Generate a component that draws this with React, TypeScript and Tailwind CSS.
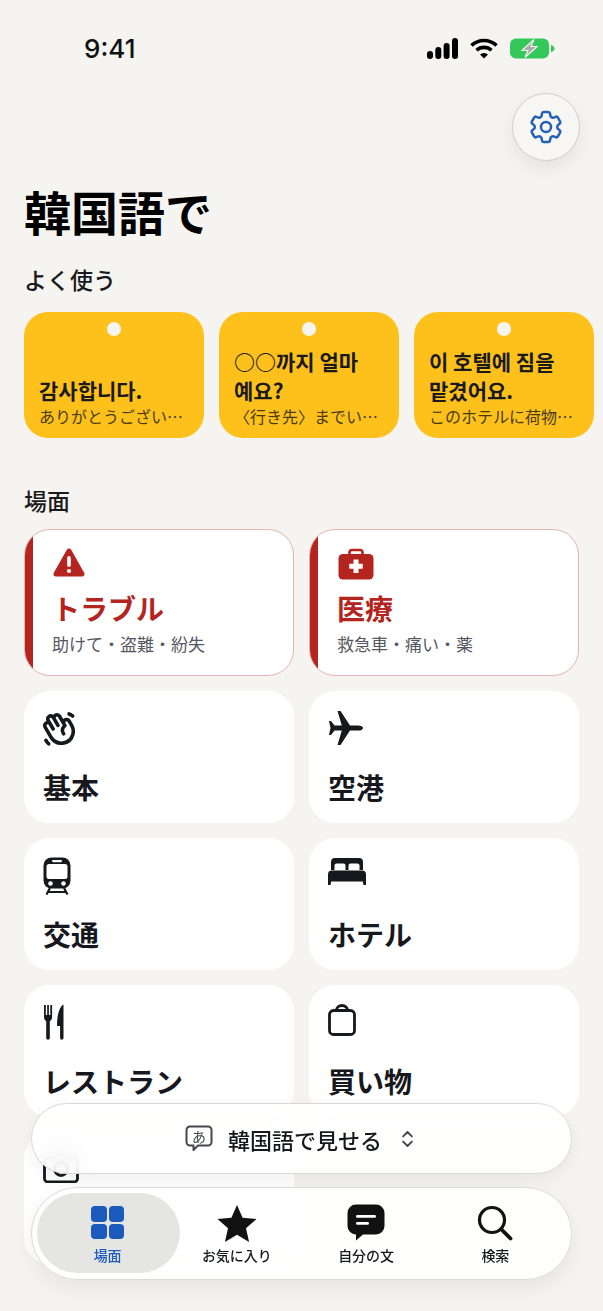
import { ChevronsUpDown } from "lucide-react";
import { HiOutlineCog6Tooth } from "react-icons/hi2";
import { PiHandWavingBold } from "react-icons/pi";
import type { ReactNode } from "react";

type Quick = { ko: string; ja: string };

const quickList: Quick[] = [
  { ko: "감사합니다.", ja: "ありがとうございます。" },
  { ko: "○○까지 얼마\n예요?", ja: "〈行き先〉までいくらですか？" },
  { ko: "이 호텔에 짐을\n맡겼어요.", ja: "このホテルに荷物を預けました。" },
];

function WarningIcon() {
  return (
    <svg width="32" height="30" viewBox="0 0 32 30">
      <path d="M16 3 L29 26 H3 Z" fill="#b3251e" stroke="#b3251e" strokeWidth="5" strokeLinejoin="round" />
      <rect x="14.2" y="8" width="3.6" height="11" rx="1.8" fill="#fff" />
      <circle cx="16" cy="23" r="2.1" fill="#fff" />
    </svg>
  );
}

function MedicalIcon() {
  return (
    <svg width="36" height="32" viewBox="0 0 36 32">
      <path d="M11.5 7V4.5a2.5 2.5 0 0 1 2.5-2.5h8a2.5 2.5 0 0 1 2.5 2.5V7" fill="none" stroke="#b3251e" strokeWidth="2.6" />
      <rect x="0.5" y="6" width="35" height="25.5" rx="4.5" fill="#b3251e" />
      <path d="M15.5 11.5h5v4.2h4.2v5h-4.2v4.2h-5v-4.2h-4.2v-5h4.2z" fill="#fff" />
    </svg>
  );
}

function PlaneIcon() {
  return (
    <svg width="36" height="36" viewBox="0 0 36 36" fill="#16181d">
      <path d="M35 18c0-1.6-2.2-2.6-5-2.6h-8L12.500 1H9.500l4.300 14.400H6.500L3 11H1l1.500 7L1 25h2l3.500-4.400h7.300L9.500 35h3L22 20.600h8c2.800 0 5-1 5-2.600z" />
    </svg>
  );
}

function TrainIcon() {
  return (
    <svg width="28" height="38" viewBox="0 0 28 38">
      <rect x="0.500" y="0.500" width="27" height="31" rx="8" fill="#16181d" />
      <rect x="3.500" y="7" width="21" height="15" rx="2.500" fill="#fff" />
      <rect x="9" y="3" width="10" height="2.200" rx="1.100" fill="#fff" />
      <circle cx="7.500" cy="26.500" r="2.300" fill="#fff" />
      <circle cx="20.500" cy="26.500" r="2.300" fill="#fff" />
      <path d="M7 31 L3.500 37.500 M21 31 L24.500 37.500 M5.500 35 H22.500" stroke="#16181d" strokeWidth="2.200" fill="none" />
    </svg>
  );
}

function BedIcon() {
  return (
    <svg width="38" height="28" viewBox="0 0 38 28" fill="#16181d">
      <path d="M3 13V5a4 4 0 0 1 4-4h24a4 4 0 0 1 4 4v8h-3.500V8.500a2 2 0 0 0-2-2h-7a2 2 0 0 0-2 2V13h-3V8.500a2 2 0 0 0-2-2h-7a2 2 0 0 0-2 2V13z" />
      <path d="M4 13.500h30a4 4 0 0 1 4 4V28h-2.500l-.7-3.500H3.200L2.500 28H0V17.500a4 4 0 0 1 4-4z" />
    </svg>
  );
}

function ForkKnifeIcon() {
  return (
    <svg width="22" height="36" viewBox="0 0 22 36" fill="#16181d">
      <path d="M1 1h1.800v10h1.400V1h1.700v10h1.400V1H9.100v12c0 2-1 3.400-2.300 4V34a1.800 1.800 0 0 1-3.600 0V17C1.900 16.400 1 15 1 13z" />
      <path d="M20.500 0.500V34a1.700 1.700 0 0 1-3.400 0V22h-2.600c-.3 0-.5-.2-.5-.5C14 12 16 3 20.500 0.500z" />
    </svg>
  );
}

function BagIcon() {
  return (
    <svg width="28" height="32" viewBox="0 0 28 32" fill="none" stroke="#16181d" strokeWidth="2.800">
      <rect x="1.500" y="6.500" width="25" height="24" rx="4" />
      <path d="M8.500 6.500V6a5.500 4.500 0 0 1 11 0v.5" />
    </svg>
  );
}

function CameraIcon() {
  return (
    <svg width="36" height="32" viewBox="0 0 36 32" fill="none" stroke="#16181d" strokeWidth="2.800">
      <path d="M5 7h6l2.500-4h9L25 7h6a3.500 3.500 0 0 1 3.500 3.500v17A3.500 3.500 0 0 1 31 31H5a3.500 3.500 0 0 1-3.500-3.500v-17A3.500 3.500 0 0 1 5 7z" />
      <circle cx="18" cy="18" r="6.500" />
    </svg>
  );
}

function SceneCard({ icon, title }: { icon: ReactNode; title: string }) {
  return (
    <div className="h-[132px] bg-white rounded-[26px] pl-[19px] pt-[19px] flex flex-col">
      <div className="h-[40px] flex items-start">{icon}</div>
      <div className="mt-[19px] text-[28px] leading-[36px] font-bold text-[#16181d]">{title}</div>
    </div>
  );
}

function AlertCard({ icon, title, sub }: { icon: ReactNode; title: string; sub: string }) {
  return (
    <div className="h-[147px] bg-white rounded-[26px] border-[1.500px] border-[#e6b4b0] overflow-hidden flex">
      <div className="w-[8px] bg-[#b3251e] shrink-0" />
      <div className="pl-[19px] pt-[18px] flex flex-col">
        <div className="h-[34px] flex items-start pl-[1px]">{icon}</div>
        <div className="mt-[8px] text-[28px] leading-[36px] font-bold text-[#b3251e]">{title}</div>
        <div className="mt-[6px] text-[17px] leading-[24px] text-[#55585f]">{sub}</div>
      </div>
    </div>
  );
}

function NavItem({ icon, label, active }: { icon: ReactNode; label: string; active?: boolean }) {
  return (
    <div className="relative flex flex-col items-center">
      <div className="h-[39px] flex items-center justify-center">{icon}</div>
      <div className={`mt-[3px] text-[14px] leading-[20px] font-medium ${active ? "text-[#1b5abc]" : "text-[#16181d]"}`}>
        {label}
      </div>
    </div>
  );
}

export default function App() {
  return (
    <div className="relative w-[603px] h-[1311px] overflow-hidden bg-[#f5f4f0] font-['Noto_Sans_CJK_JP','Noto_Sans_CJK_KR',sans-serif]">
      {/* status bar */}
      <div className="h-[93px] flex items-start justify-between pl-[84px] pr-[48px] pt-[31px]">
        <div className="font-['Inter',sans-serif] text-[26px] leading-[36px] font-medium text-[#111]">9:41</div>
        <div className="flex items-center gap-[12px] pt-[7px]">
          <svg width="31" height="21" viewBox="0 0 31 21" fill="#000">
            <rect x="0" y="13" width="6" height="8" rx="3" />
            <rect x="8.300" y="9" width="6" height="12" rx="3" />
            <rect x="16.600" y="5" width="6" height="16" rx="3" />
            <rect x="25" y="0" width="6" height="21" rx="3" />
          </svg>
          <svg width="28" height="21" viewBox="0 0 28 21" fill="none" stroke="#000" strokeWidth="3.600">
            <path d="M1.500 7.500a18 18 0 0 1 25 0" />
            <path d="M6.500 12.300a11 11 0 0 1 15 0" />
            <path d="M14 20.500l-4-4a5.800 5.800 0 0 1 8 0z" fill="#000" stroke="none" />
          </svg>
          <svg width="45" height="21" viewBox="0 0 45 21">
            <rect x="0" y="0.500" width="39" height="20" rx="6" fill="#34c759" />
            <path d="M41 7v7c2.200-.5 3.500-2 3.500-3.500S43.200 7.500 41 7z" fill="#34c759" />
            <path d="M24 1.500 L12 12.500 H18 L15 19.500 L27 8.500 H21 Z" fill="#a8a8a6" stroke="#f5f4f0" strokeWidth="1.200" />
          </svg>
        </div>
      </div>

      <div className="flex justify-end pr-[23px]">
        <div className="w-[68px] h-[68px] rounded-full bg-[#f7f6f3] border border-[#cfcfcc] shadow-[0_8px_20px_rgba(0,0,0,0.07)] flex items-center justify-center">
          <HiOutlineCog6Tooth className="w-[40px] h-[40px] text-[#2460b8]" />
        </div>
      </div>

      <h1 className="mt-[22px] pl-[24px] text-[47px] leading-[56px] font-bold text-black">韓国語で</h1>

      <h2 className="mt-[24px] pl-[24px] text-[23px] leading-[32px] font-medium text-[#1a1a1c]">よく使う</h2>

      <div className="mt-[17px] pl-[24px] flex gap-[15px]">
        {quickList.map((q) => (
          <div key={q.ko} className="relative w-[180px] h-[126px] shrink-0 rounded-[24px] bg-[#fec11c] px-[15px] pb-[11px] flex flex-col justify-end">
            <div className="absolute left-[83px] top-[10px] w-[14px] h-[14px] rounded-full bg-[#f5f4f0]" />
            <div className="text-[21px] leading-[29px] font-bold text-[#1a1a1c] whitespace-pre-line">{q.ko}</div>
            <div className="text-[16px] leading-[22px] text-[#4a3c10] truncate">{q.ja}</div>
          </div>
        ))}
      </div>

      <h2 className="mt-[46px] pl-[24px] text-[23px] leading-[32px] font-medium text-[#1a1a1c]">場面</h2>

      <div className="mt-[13px] ml-[24px] w-[555px] grid grid-cols-2 gap-[15px]">
        <AlertCard icon={<WarningIcon />} title="トラブル" sub="助けて・盗難・紛失" />
        <AlertCard icon={<MedicalIcon />} title="医療" sub="救急車・痛い・薬" />
        <SceneCard icon={<PiHandWavingBold className="w-[38px] h-[38px] text-[#16181d] -ml-[3px]" />} title="基本" />
        <SceneCard icon={<PlaneIcon />} title="空港" />
        <SceneCard icon={<TrainIcon />} title="交通" />
        <SceneCard icon={<BedIcon />} title="ホテル" />
        <SceneCard icon={<ForkKnifeIcon />} title="レストラン" />
        <SceneCard icon={<BagIcon />} title="買い物" />
        <SceneCard icon={<CameraIcon />} title="写真" />
      </div>

      {/* floating glass bars */}
      <div className="absolute left-[31px] top-[1103px] w-[541px] h-[71px] rounded-full bg-white/85 backdrop-blur-md border border-[#d9d9d6] shadow-[0_6px_18px_rgba(0,0,0,0.06)] flex items-center justify-center gap-[15px]">
        <svg width="28" height="27" viewBox="0 0 28 27" fill="none">
          <path d="M5 1.500h18a3.500 3.500 0 0 1 3.500 3.500v12a3.500 3.500 0 0 1-3.500 3.500H13l-4.500 4.500v-4.500H5A3.500 3.500 0 0 1 1.500 17V5A3.500 3.500 0 0 1 5 1.500z" stroke="#44474d" strokeWidth="2" strokeLinejoin="round" />
          <text x="14" y="16.500" textAnchor="middle" fontSize="14" fill="#44474d">あ</text>
        </svg>
        <div className="text-[22px] leading-[30px] font-medium text-[#16181d]">韓国語で見せる</div>
        <ChevronsUpDown className="w-[21px] h-[24px] text-[#44474d]" strokeWidth={2.200} />
      </div>

      <div className="absolute left-[31px] top-[1187px] w-[541px] h-[93px] rounded-full bg-white/85 backdrop-blur-md border border-[#d9d9d6] shadow-[0_8px_22px_rgba(0,0,0,0.07)] px-[11px] pt-[15px] grid grid-cols-4">
        <div className="absolute left-[5px] top-[5px] w-[143px] h-[80px] rounded-full bg-[#e2e2e1]/90" />
        <NavItem
          active
          label="場面"
          icon={
            <div className="grid grid-cols-2 gap-[2px] w-[33px] h-[33px]">
              <div className="bg-[#1b5abc] rounded-[4px]" />
              <div className="bg-[#1b5abc] rounded-[4px]" />
              <div className="bg-[#1b5abc] rounded-[4px]" />
              <div className="bg-[#1b5abc] rounded-[4px]" />
            </div>
          }
        />
        <NavItem
          label="お気に入り"
          icon={
            <svg width="40" height="38" viewBox="0 0 40 38" fill="#111">
              <path d="M20 1l5.600 12.800 13.900 1.300-10.500 9.200 3.100 13.700L20 30.800 7.900 38 11 24.300.500 15.100l13.900-1.300z" />
            </svg>
          }
        />
        <NavItem
          label="自分の文"
          icon={
            <svg width="38" height="37" viewBox="0 0 38 37">
              <path d="M9 0.500h20a8.500 8.500 0 0 1 8.500 8.500v13a8.500 8.500 0 0 1-8.500 8.500H16l-7 6v-6A8.500 8.500 0 0 1 .5 22V9A8.500 8.500 0 0 1 9 .5z" fill="#111" />
              <rect x="9" y="11" width="20" height="2.800" rx="1.400" fill="#fff" />
              <rect x="9" y="18" width="13" height="2.800" rx="1.400" fill="#fff" />
            </svg>
          }
        />
        <NavItem
          label="検索"
          icon={
            <svg width="36" height="36" viewBox="0 0 36 36" fill="none" stroke="#111" strokeWidth="3.200" strokeLinecap="round">
              <circle cx="15" cy="15" r="12.500" />
              <path d="M24.500 24.500L33.500 33.500" strokeWidth="3.800" />
            </svg>
          }
        />
      </div>
    </div>
  );
}
